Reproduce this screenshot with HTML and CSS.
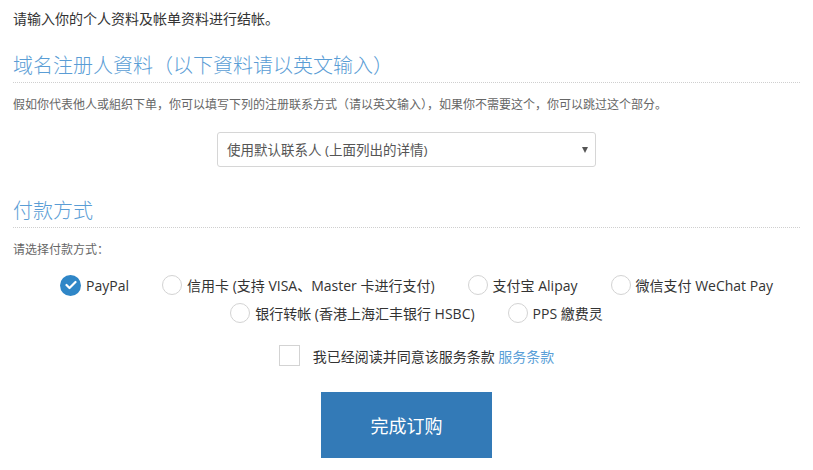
FILE: index.html
```html
<!DOCTYPE html>
<html>
<head>
    <meta charset="utf-8">
    <title>结帐</title>
    <link rel="stylesheet" href="styles.css">
</head>
<body>
    <div class="checkout">
        <!-- Intro -->
        <p class="intro">请输入你的个人资料及帐单资料进行结帐。</p>

        <!-- Domain registrant -->
        <h2 class="section-title">域名注册人資料（以下資料请以英文输入）</h2>
        <p class="hint">假如你代表他人或組织下单，你可以填写下列的注册联系方式（请以英文输入），如果你不需要这个，你可以跳过这个部分。</p>

        <div class="contact-row">
            <div class="select-wrap">
                <select class="contact-select">
                    <option>使用默认联系人 (上面列出的详情)</option>
                </select>
            </div>
        </div>

        <!-- Payment method -->
        <h2 class="section-title">付款方式</h2>
        <p class="hint">请选择付款方式：</p>

        <div class="pay-methods">
            <label class="pay-option checked">
                <span class="radio">
                    <svg width="12" height="10" viewBox="0 0 12 10"><polyline points="1.5,5 4.5,8 10.5,2" fill="none" stroke="#fff" stroke-width="2.2" stroke-linecap="round" stroke-linejoin="round"/></svg>
                </span>
                PayPal
            </label>
            <label class="pay-option"><span class="radio"></span>信用卡 (支持 VISA、Master 卡进行支付)</label>
            <label class="pay-option"><span class="radio"></span>支付宝 Alipay</label>
            <label class="pay-option"><span class="radio"></span>微信支付 WeChat Pay</label>
            <label class="pay-option"><span class="radio"></span>银行转帐 (香港上海汇丰银行 HSBC)</label>
            <label class="pay-option"><span class="radio"></span>PPS 繳费灵</label>
        </div>

        <!-- Terms -->
        <div class="terms">
            <span class="checkbox"></span>
            <span class="terms-text">我已经阅读并同意该服务条款 <a href="#" class="terms-link">服务条款</a></span>
        </div>

        <div class="submit-row">
            <button class="submit-btn">完成订购</button>
        </div>
    </div>
</body>
</html>
```

FILE: styles.css
```css
/* Page basics */
body {
    margin: 0;
    background-color: #ffffff;
    font-family: "Open Sans", "Noto Sans CJK SC", sans-serif;
    color: #333;
}

.checkout {
    padding: 0 13px;
}

/* Intro line */
.intro {
    margin: 9px 0 0;
    font-size: 14px;
    line-height: 20px;
    color: #333;
}

/* Section headings with dotted rule */
.section-title {
    margin: 25px 0 0;
    padding-bottom: 4px;
    font-size: 20px;
    line-height: 24px;
    font-weight: 300;
    color: #5a9dd5;
    border-bottom: 1px dotted #cfcfcf;
}

.section-title + .hint {
    margin-top: 13px;
}

.hint {
    margin: 0;
    font-size: 12px;
    line-height: 18px;
    color: #666;
}

/* Contact select */
.contact-row {
    display: flex;
    justify-content: center;
    margin-top: 18px;
}

.select-wrap {
    position: relative;
    width: 379px;
}

.select-wrap::after {
    content: "";
    position: absolute;
    right: 8px;
    top: 15px;
    border-left: 3.5px solid transparent;
    border-right: 3.5px solid transparent;
    border-top: 6px solid #555;
    pointer-events: none;
}

.contact-select {
    appearance: none;
    -webkit-appearance: none;
    width: 100%;
    height: 35px;
    padding: 0 24px 0 9px;
    border: 1px solid #d6d6d6;
    border-radius: 3px;
    background-color: #fff;
    font-family: "Open Sans", "Noto Sans CJK SC", sans-serif;
    font-size: 13.5px;
    color: #555;
}

.contact-row + .section-title {
    margin-top: 32px;
}

/* Payment options */
.pay-methods {
    display: flex;
    flex-wrap: wrap;
    justify-content: center;
    column-gap: 33px;
    row-gap: 6px;
    margin-top: 15px;
    padding-left: 20px;
}

.pay-option {
    display: flex;
    align-items: center;
    gap: 5px;
    height: 22px;
    font-size: 14px;
    color: #333;
    cursor: pointer;
}

.radio {
    display: flex;
    align-items: center;
    justify-content: center;
    width: 20px;
    height: 20px;
    box-sizing: border-box;
    border: 1px solid #d3d3d3;
    border-radius: 50%;
    background-color: #fff;
}

.pay-option.checked .radio {
    width: 21px;
    height: 21px;
    border: none;
    background-color: #2f86c7;
}

/* Terms checkbox */
.terms {
    display: flex;
    justify-content: center;
    align-items: center;
    gap: 13px;
    margin-top: 21px;
    padding-left: 20px;
    font-size: 14px;
}

.checkbox {
    width: 21px;
    height: 21px;
    box-sizing: border-box;
    border: 1px solid #d3d3d3;
    background-color: #fff;
}

.terms-text {
    color: #333;
}

.terms-link {
    color: #5a9fd8;
    text-decoration: none;
}

/* Submit */
.submit-row {
    display: flex;
    justify-content: center;
    margin-top: 26px;
}

.submit-btn {
    width: 171px;
    height: 66px;
    border: none;
    background-color: #337ab7;
    color: #fff;
    font-family: "Open Sans", "Noto Sans CJK SC", sans-serif;
    font-size: 18px;
    cursor: pointer;
}
```
